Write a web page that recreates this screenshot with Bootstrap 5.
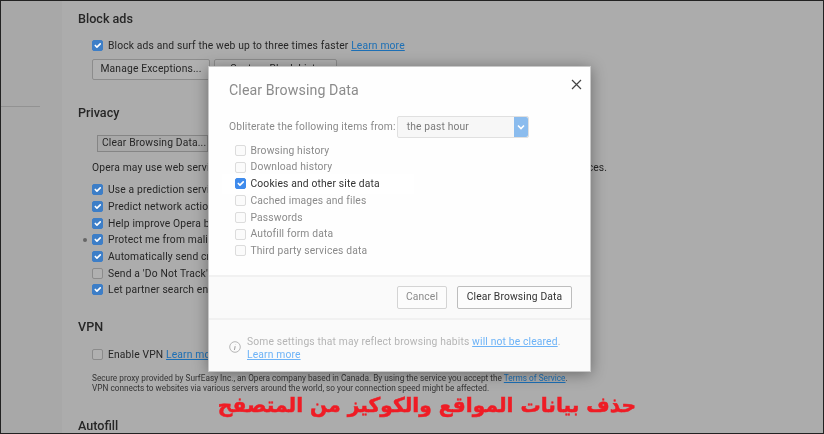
<!DOCTYPE html>
<html lang="en">
<head>
<meta charset="utf-8">
<title>Clear Browsing Data</title>
<link href="https://cdn.jsdelivr.net/npm/bootstrap@5.3.0/dist/css/bootstrap.min.css" rel="stylesheet">
<style>
html,body{margin:0;height:434px;overflow:hidden;background:#222}
body{font-family:Roboto,"Liberation Sans",sans-serif;color:#333}
.shot{position:relative;width:822px;height:432px;margin:1px 0 0 1px;background:#aaa;overflow:hidden;display:flex;filter:blur(.35px)}
.side{width:61px;flex:none;background:#a8a8a8;padding-top:105px}
.side-rule{width:39px;height:1px;background:#929292}
.pane{flex:1;padding:9px 0 0 16px;background:#acacac;font-size:10.3px;letter-spacing:.15px;color:#262626}
.hd{font-size:12.6px;font-weight:500;line-height:18px;color:#262626;margin:0;letter-spacing:0}
.chk{display:flex;align-items:center;gap:5px;height:16.67px;margin-left:14px;position:relative;white-space:nowrap}
.chk .form-check-input,.mchk .form-check-input{width:11px;height:11px;margin:0;border-radius:2px;flex:none;float:none;background-color:#b0b0b0;border:1px solid #8b8b8b}
.chk .form-check-input:checked{background-color:#3d7ec7;border-color:#3d7ec7;background-size:11px}
.lnk{color:#1c6fb5;text-decoration:underline}
.row-btns{margin:5px 0 0 14px}
.gbtn{font-size:10.3px;letter-spacing:.15px;line-height:1;padding:0;height:21px;border:1px solid #8c8c8c;border-radius:2px;background:#b0b0b0;color:#262626;white-space:nowrap}
.g1{width:118px}
.g2{width:123px}
.g3{width:111px;height:17px;border-radius:0;background:#a8a8a8;border-color:#858585;margin:13px 0 0 19px;text-align:left;padding-left:4px;display:block}
.opera-line{margin:8px 0 6px 14px;line-height:16px;white-space:nowrap}
.fine{font-size:8.26px;line-height:10.5px;color:#333;margin:10px 0 0 14px;letter-spacing:0;white-space:nowrap}
.dot{position:absolute;left:-9px;top:6px;width:4px;height:4px;border-radius:50%;background:#666}
.gap-priv{margin-top:24px}
.gap-vpn{margin-top:20px}
.gap-en{margin-top:10px}
.gap-auto{margin-top:23px}
.dlg{position:absolute;left:207px;top:65px;width:383px;height:306px;background:#fefefe;border:1px solid #c8c8c8;box-shadow:0 2px 14px rgba(0,0,0,.38);display:flex;flex-direction:column;color:#8a8a8a;font-size:10.3px;letter-spacing:.15px}
.dlg-top{flex:1;padding:13px 8px 0 20px}
.dlg-title{font-size:14.2px;line-height:20px;font-weight:400;margin:0;color:#8b8b8b;letter-spacing:.1px}
.closex{width:11px;height:11px;display:block;margin-top:-1px}
.from{height:22px;margin-top:16px;gap:1px}
.sel{width:132px;height:22px;border:1px solid #e0e0e0;border-radius:2px;background:#f7f7f7;display:flex;align-items:center;justify-content:space-between;padding-left:9px;color:#7a7a7a}
.sel-arrow{width:14px;height:20px;background:#8bbcee;display:flex;align-items:center;justify-content:center;border-radius:0 2px 2px 0}
.mlist{margin-top:4px;margin-left:-7px;width:192px}
.mchk{display:flex;align-items:center;gap:4.5px;height:16.75px;padding-left:13px;white-space:nowrap}
.mchk .form-check-input{background-color:#fbfbfb;border-color:#dcdcdc}
.mchk .form-check-input:checked{background-color:#3f8bec;border-color:#3f8bec;background-size:11px}
.mchk.on{background:#fff;color:#333;height:20px;margin:-1.6px 0;box-shadow:0 0 6px #fff}
.dlg-foot{height:43px;background:#fafafa;border-top:2px solid #f1f1f1;padding:0 18px 0 0;display:flex;justify-content:flex-end;align-items:center;gap:10px}
.mbtn{height:23px;padding:0;font-size:10.3px;letter-spacing:.15px;border:1px solid #d4d4d4;border-radius:2px;background:#fcfcfc;color:#8a8a8a;line-height:1;white-space:nowrap}
.mb1{width:50px}
.mb2{width:115px;color:#333;border-color:#bdbdbd}
.dlg-note{height:53px;background:#fafafa;border-top:2px solid #f1f1f1;padding:15px 0 0 20px;display:flex;gap:6px;line-height:13px;color:#b5b5b5}
.dlg-note a{color:#6db3f7;text-decoration:underline}
.info{width:12px;height:12px;margin-top:6px;flex:none}
.cap{position:absolute;left:217px;top:390px;width:418px;text-align:center;font-family:"DejaVu Sans",sans-serif;font-weight:700;font-size:20.2px;line-height:28px;color:#ef1c25;white-space:nowrap;-webkit-text-stroke:.5px #ef1c25}
</style>
</head>
<body>
<div class="shot">
  <div class="side"><div class="side-rule"></div></div>
  <main class="pane">
    <h2 class="hd">Block ads</h2>
    <div class="chk" style="margin-top:9px"><input class="form-check-input" type="checkbox" checked><span>Block ads and surf the web up to three times faster <a class="lnk" href="#">Learn more</a></span></div>
    <div class="d-flex gap-1 row-btns"><button class="btn gbtn g1">Manage Exceptions...</button><button class="btn gbtn g2">Custom Block Lists</button></div>
    <h2 class="hd gap-priv">Privacy</h2>
    <button class="btn gbtn g3">Clear Browsing Data...</button>
    <div class="opera-line">Opera may use web services to improve your browsing experience. You may optionally disable these services.</div>
    <div class="chk"><input class="form-check-input" type="checkbox" checked><span>Use a prediction service</span></div>
    <div class="chk"><input class="form-check-input" type="checkbox" checked><span>Predict network actions</span></div>
    <div class="chk"><input class="form-check-input" type="checkbox" checked><span>Help improve Opera by</span></div>
    <div class="chk"><i class="dot"></i><input class="form-check-input" type="checkbox" checked><span>Protect me from malicious</span></div>
    <div class="chk"><input class="form-check-input" type="checkbox" checked><span>Automatically send crash</span></div>
    <div class="chk"><input class="form-check-input" type="checkbox"><span>Send a 'Do Not Track'</span></div>
    <div class="chk"><input class="form-check-input" type="checkbox" checked><span>Let partner search engines</span></div>
    <h2 class="hd gap-vpn">VPN</h2>
    <div class="chk gap-en"><input class="form-check-input" type="checkbox"><span>Enable VPN <a class="lnk" href="#">Learn more</a></span></div>
    <p class="fine mb-0">Secure proxy provided by SurfEasy Inc., an Opera company based in Canada. By using the service you accept the <a class="lnk" href="#">Terms of Service</a>.<br>VPN connects to websites via various servers around the world, so your connection speed might be affected.</p>
    <h2 class="hd gap-auto">Autofill</h2>
  </main>

  <section class="dlg">
    <div class="dlg-top">
      <div class="d-flex justify-content-between align-items-start">
        <h1 class="dlg-title">Clear Browsing Data</h1>
        <svg class="closex" viewBox="0 0 11 11"><path d="M1 1 10 10M10 1 1 10" stroke="#444" stroke-width="1.2" fill="none"/></svg>
      </div>
      <div class="d-flex align-items-center from"><span>Obliterate the following items from:</span>
        <div class="sel"><span>the past hour</span><span class="sel-arrow"><svg width="8" height="6" viewBox="0 0 8 6"><path d="M1 1.5 4 4.5 7 1.5" stroke="#fff" stroke-width="1.6" fill="none"/></svg></span></div>
      </div>
      <div class="mlist">
        <div class="mchk"><input class="form-check-input" type="checkbox"><span>Browsing history</span></div>
        <div class="mchk"><input class="form-check-input" type="checkbox"><span>Download history</span></div>
        <div class="mchk on"><input class="form-check-input" type="checkbox" checked><span>Cookies and other site data</span></div>
        <div class="mchk"><input class="form-check-input" type="checkbox"><span>Cached images and files</span></div>
        <div class="mchk"><input class="form-check-input" type="checkbox"><span>Passwords</span></div>
        <div class="mchk"><input class="form-check-input" type="checkbox"><span>Autofill form data</span></div>
        <div class="mchk"><input class="form-check-input" type="checkbox"><span>Third party services data</span></div>
      </div>
    </div>
    <div class="dlg-foot"><button class="btn mbtn mb1">Cancel</button><button class="btn mbtn mb2">Clear Browsing Data</button></div>
    <div class="dlg-note">
      <svg class="info" viewBox="0 0 12 12"><circle cx="6" cy="6" r="5.3" fill="none" stroke="#b5b5b5"/><path d="M6.6 3.2V3.6M6.2 5.2 5.4 9" stroke="#a5a5a5" stroke-width="1.1" fill="none"/></svg>
      <div>Some settings that may reflect browsing habits <a href="#">will not be cleared</a>.<br><a href="#">Learn more</a></div>
    </div>
  </section>

  <div class="cap" dir="rtl" lang="ar">حذف بيانات المواقع والكوكيز من المتصفح</div>
</div>
<script src="https://cdn.jsdelivr.net/npm/bootstrap@5.3.0/dist/js/bootstrap.bundle.min.js"></script>
</body>
</html>
